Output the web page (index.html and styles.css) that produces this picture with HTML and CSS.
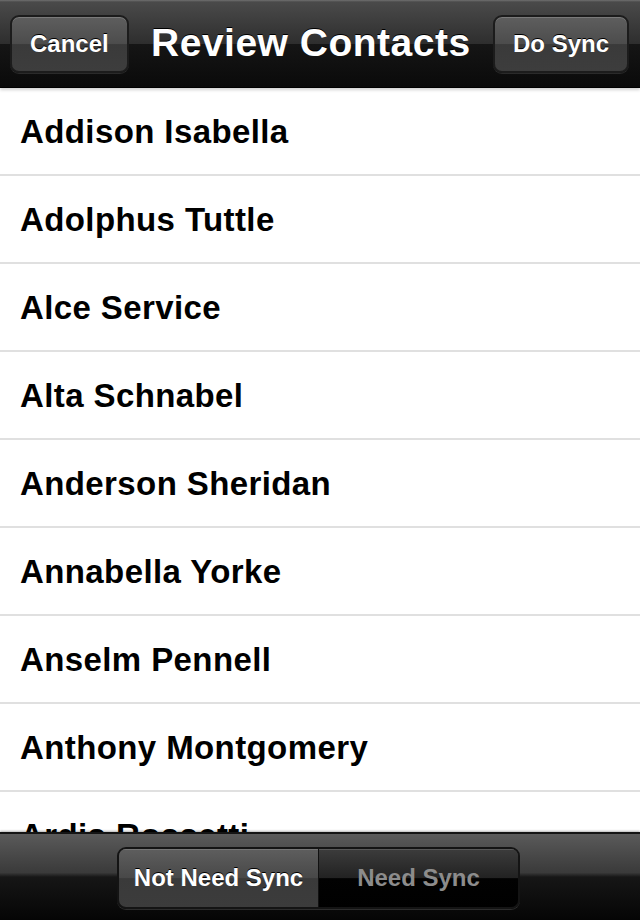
FILE: index.html
```html
<!DOCTYPE html>
<html lang="en">
<head>
    <meta name="viewport" content="width=device-width, initial-scale=1.0">
    <title>Review Contacts</title>
    <link rel="stylesheet" href="styles.css">
</head>
<body>
<div class="screen">
    <div class="navbar">
        <button class="bar-button">Cancel</button>
        <div class="nav-title">Review Contacts</div>
        <button class="bar-button">Do Sync</button>
    </div>

    <div class="contact-list">
        <div class="contact-row">Addison Isabella</div>
        <div class="contact-row">Adolphus Tuttle</div>
        <div class="contact-row">Alce Service</div>
        <div class="contact-row">Alta Schnabel</div>
        <div class="contact-row">Anderson Sheridan</div>
        <div class="contact-row">Annabella Yorke</div>
        <div class="contact-row">Anselm Pennell</div>
        <div class="contact-row">Anthony Montgomery</div>
        <div class="contact-row">Ardis Rossetti</div>
        <div class="contact-row">Arlene Whitfield</div>
    </div>

    <div class="toolbar">
        <div class="segmented">
            <div class="segment selected">Not Need Sync</div>
            <div class="segment">Need Sync</div>
        </div>
    </div>
</div>
</body>
</html>
```

FILE: styles.css
```css
body {
    margin: 0;
    padding: 0;
    background: #ffffff;
    font-family: "Liberation Sans", Arial, sans-serif;
    overflow: hidden;
}

.screen {
    display: flex;
    flex-direction: column;
    width: 640px;
    height: 920px;
}

/* top bar */
.navbar {
    position: relative;
    z-index: 2;
    height: 88px;
    flex: none;
    box-sizing: border-box;
    display: flex;
    align-items: center;
    justify-content: space-between;
    padding: 0 11px 0 10px;
    background: linear-gradient(#707070 0, #4a4a4a 2px, #2e2e2e 50%, #151515 51%, #0a0a0a 100%);
    border-bottom: 1px solid #000;
    box-shadow: 0 2px 3px rgba(0, 0, 0, 0.18);
}

.nav-title {
    color: #fff;
    font-size: 39px;
    font-weight: bold;
    text-shadow: 0 -1px 0 #000;
    letter-spacing: 0.5px;
    margin-top: -2px;
}

.bar-button {
    height: 58px;
    padding: 0 18px;
    border: 2px solid #1c1c1c;
    border-radius: 9px;
    background: linear-gradient(#5e5e5e 0, #4c4c4c 50%, #3a3a3a 51%, #3d3d3d 100%);
    box-shadow: inset 0 1px 0 rgba(255, 255, 255, 0.18), 0 1px 0 rgba(255, 255, 255, 0.12);
    color: #fff;
    font-family: "Liberation Sans", Arial, sans-serif;
    font-size: 24px;
    font-weight: bold;
    text-shadow: 0 -1px 0 #000;
}

/* list */
.contact-list {
    flex: 1;
    overflow: hidden;
    background: #fff;
}

.contact-row {
    height: 86px;
    line-height: 88px;
    padding-left: 20px;
    border-bottom: 2px solid #e0e0e0;
    font-size: 33px;
    font-weight: bold;
    letter-spacing: 0.4px;
    color: #000;
    white-space: nowrap;
}

/* bottom bar */
.toolbar {
    height: 88px;
    flex: none;
    box-sizing: border-box;
    display: flex;
    align-items: center;
    justify-content: center;
    border-top: 2px solid #141414;
    padding: 1px 3px 0 0;
    background: linear-gradient(#5a5a5a 0, #3a3a3a 45%, #161616 50%, #050505 100%);
    box-shadow: 0 -1px 2px rgba(0, 0, 0, 0.3);
}

.segmented {
    display: flex;
    height: 58px;
    border: 2px solid #141414;
    border-radius: 9px;
    overflow: hidden;
    box-shadow: 0 1px 0 rgba(255, 255, 255, 0.15);
}

.segment {
    width: 199px;
    display: flex;
    align-items: center;
    justify-content: center;
    font-size: 24px;
    font-weight: bold;
    color: #8c8c8c;
    background: linear-gradient(#3c3c3c 0, #222 50%, #020202 51%, #000 100%);
    box-shadow: inset 0 1px 0 rgba(255, 255, 255, 0.15);
}

.segment.selected {
    color: #fff;
    border-right: 1px solid #111;
    background: linear-gradient(#5e5e5e 0, #484848 50%, #3a3a3a 51%, #3c3c3c 100%);
    text-shadow: 0 -1px 0 #000;
}
```
